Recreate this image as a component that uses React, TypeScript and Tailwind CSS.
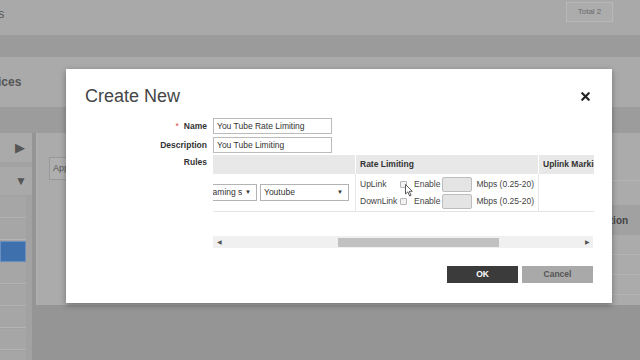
import { X } from 'lucide-react'

function SelectBox({ text, className }: { text: string; className: string }) {
  return (
    <div className={`flex h-[17px] shrink-0 items-center border border-[#b3b3b3] bg-white pl-[3px] pr-[5px] ${className}`}>
      <span className="min-w-0 flex-1 overflow-hidden whitespace-nowrap text-[8.5px] text-[#333]">{text}</span>
      <span className="ml-[3px] text-[6px] text-[#333]">▼</span>
    </div>
  )
}

function RateLine({ label }: { label: string }) {
  return (
    <div className="flex h-[15px] items-center whitespace-nowrap text-[8.5px] text-[#444]">
      <span className="w-[44px] shrink-0 pl-[4px]">{label}</span>
      <span className="h-[7px] w-[7px] shrink-0 rounded-[1px] border border-[#b5b5b5] bg-[#f3f3f3]" />
      <span className="ml-[7px]">Enable</span>
      <span className="ml-[2px] h-[15px] w-[30px] shrink-0 rounded-[2px] border border-[#bdbdbd] bg-[#e4e4e4]" />
      <span className="ml-[4px]">Mbps (0.25-20)</span>
    </div>
  )
}

function CreateNewModal() {
  return (
    <div className="absolute left-[66px] top-[69px] flex h-[234px] w-[546px] flex-col bg-white shadow-[0_2px_6px_rgba(0,0,0,0.35)]">
      <div className="mt-[17px] flex h-[21px] items-center justify-between pl-[19px] pr-[20px]">
        <h1 className="text-[18px] leading-[21px] text-[#454545]">Create New</h1>
        <X className="h-[13px] w-[13px] text-[#222]" strokeWidth={4} aria-hidden="true" />
      </div>

      <div className="mt-[11px] flex flex-col gap-[3px]">
        <div className="flex items-center">
          <label className="w-[141px] text-right text-[8.5px] font-bold text-[#333]">
            <span className="mr-[5px] font-normal text-[#e0504a]">*</span>Name
          </label>
          <div className="ml-[6px] flex h-[16px] w-[119px] items-center border border-[#bbb] pl-[3px] text-[8.5px] text-[#333]">
            You Tube Rate Limiting
          </div>
        </div>
        <div className="flex items-center">
          <label className="w-[141px] text-right text-[8.5px] font-bold text-[#333]">Description</label>
          <div className="ml-[6px] flex h-[16px] w-[119px] items-center border border-[#bbb] pl-[3px] text-[8.5px] text-[#333]">
            You Tube Limiting
          </div>
        </div>
      </div>

      <div className="mt-[2px] flex">
        <label className="w-[141px] pt-[1px] text-right text-[8.5px] font-bold leading-[12px] text-[#333]">Rules</label>
        <div className="relative ml-[6px] w-[381px] overflow-hidden">
          <div className="flex h-[19px] items-center bg-[#e8e8e8] text-[8.5px] font-bold text-[#333]">
            <div className="w-[142px] shrink-0" />
            <div className="flex h-full w-[183px] shrink-0 items-center border-l border-white pl-[4px]">Rate Limiting</div>
            <div className="flex h-full min-w-0 flex-1 items-center overflow-hidden whitespace-nowrap border-l border-white pl-[4px]">
              Uplink Marking
            </div>
          </div>
          <div className="flex h-[38px] border-b border-[#e4e4e4]">
            <div className="flex w-[142px] shrink-0 items-center gap-[3px]">
              <SelectBox text="Streaming services" className="-ml-[20px] w-[64px]" />
              <SelectBox text="Youtube" className="w-[89px]" />
            </div>
            <div className="flex w-[183px] shrink-0 flex-col gap-[2px] border-l border-[#e6e6e6] pt-[3px]">
              <RateLine label="UpLink" />
              <RateLine label="DownLink" />
            </div>
            <div className="min-w-0 flex-1 border-l border-[#e6e6e6]" />
          </div>

          <div className="mt-[24px] flex h-[12px] w-[380px] items-center bg-[#f0f0f0]">
            <span className="w-[12px] text-center text-[6px] text-[#555]">◀</span>
            <span className="w-[113px]" />
            <span className="h-[9px] w-[161px] bg-[#c1c1c1]" />
            <span className="flex-1" />
            <span className="w-[12px] text-center text-[6px] text-[#555]">▶</span>
          </div>

          <svg className="absolute left-[192px] top-[29px]" width="9" height="13" viewBox="0 0 9 13" aria-hidden="true">
            <path d="M0.5 0.5 L0.5 10 L2.8 7.9 L4.6 12 L6.1 11.3 L4.3 7.3 L7.3 7.3 Z" fill="#fff" stroke="#333" strokeWidth="0.8" />
          </svg>
        </div>
      </div>

      <div className="mt-[18px] flex justify-end gap-[4px] pr-[19px]">
        <button className="h-[17px] w-[71px] bg-[#3b3b3b] text-[8.5px] font-bold text-white">OK</button>
        <button className="h-[17px] w-[71px] bg-[#a9a9a9] text-[8.5px] font-bold text-[#555]">Cancel</button>
      </div>
    </div>
  )
}

export default function App() {
  const leftRows = ['a', 'b', 'sel', 'c', 'd', 'e', 'f', 'g']
  return (
    <div className="relative h-[360px] w-[640px] overflow-hidden bg-[#959595] font-['Liberation_Sans',Arial,sans-serif]">
      <div className="flex h-[35px] items-start justify-between bg-[#a9a9a9] pr-[27px] pt-[2px]">
        <span className="-ml-[5px] mt-[3px] text-[12px] text-[#555]">ts</span>
        <div className="flex h-[20px] w-[47px] items-center justify-center border border-[#b8b8b8] bg-[#acacac] text-[8px] text-[#6a6a6a]">
          Total 2
        </div>
      </div>
      <div className="h-[22px] bg-[#9b9b9b]" />
      <div className="flex h-[50px] items-center bg-[#aaaaaa]">
        <span className="-ml-[24px] text-[12px] font-bold text-[#555]">Devices</span>
      </div>
      <div className="h-[26px] bg-[#9c9c9c]" />

      <div className="flex h-[227px]">
        <div className="flex w-[32px] shrink-0 flex-col overflow-hidden bg-[#a2a2a2]">
          <div className="flex h-[29px] shrink-0 items-center justify-end bg-[#aaaaaa] pr-[7px]">
            <span className="text-[13px] leading-none text-[#555]">▶</span>
          </div>
          <div className="mt-[5px] flex h-[28px] shrink-0 items-center justify-end bg-[#a9a9a9] pr-[5px]">
            <span className="text-[12px] leading-none text-[#555]">▼</span>
          </div>
          <div className="mt-[2px] flex w-[26px] shrink-0 flex-col gap-[1px]">
            {leftRows.map((row) => (
              <div
                key={row}
                className={
                  row === 'sel'
                    ? 'h-[21px] shrink-0 border border-[#6a8fc0] bg-[#3f70ae]'
                    : 'h-[21px] shrink-0 border-b border-[#b3b3b3] bg-[#a6a6a6]'
                }
              />
            ))}
          </div>
        </div>

        <div className="ml-[4px] flex h-[172px] flex-1 flex-col border-l border-[#b0b0b0] bg-[#ababab]">
          <div className="ml-[12px] mt-[24px] flex h-[23px] w-[40px] items-center border border-[#999] bg-[#afafaf] pl-[3px] text-[9px] text-[#555]">
            Apply
          </div>
          <div className="ml-[200px] flex flex-col">
            <div className="h-[25px] border-t border-[#b6b6b6]" />
            <div className="flex h-[30px] items-center bg-[#a1a1a1]">
              <div className="flex-1" />
              <div className="w-[43px] text-[10px] font-bold text-[#444]">Action</div>
            </div>
            <div className="h-[20px] border-b border-[#b4b4b4]" />
            <div className="h-[20px] border-b border-[#b4b4b4]" />
            <div className="h-[20px] border-b border-[#b4b4b4]" />
          </div>
        </div>
      </div>

      <CreateNewModal />
    </div>
  )
}
